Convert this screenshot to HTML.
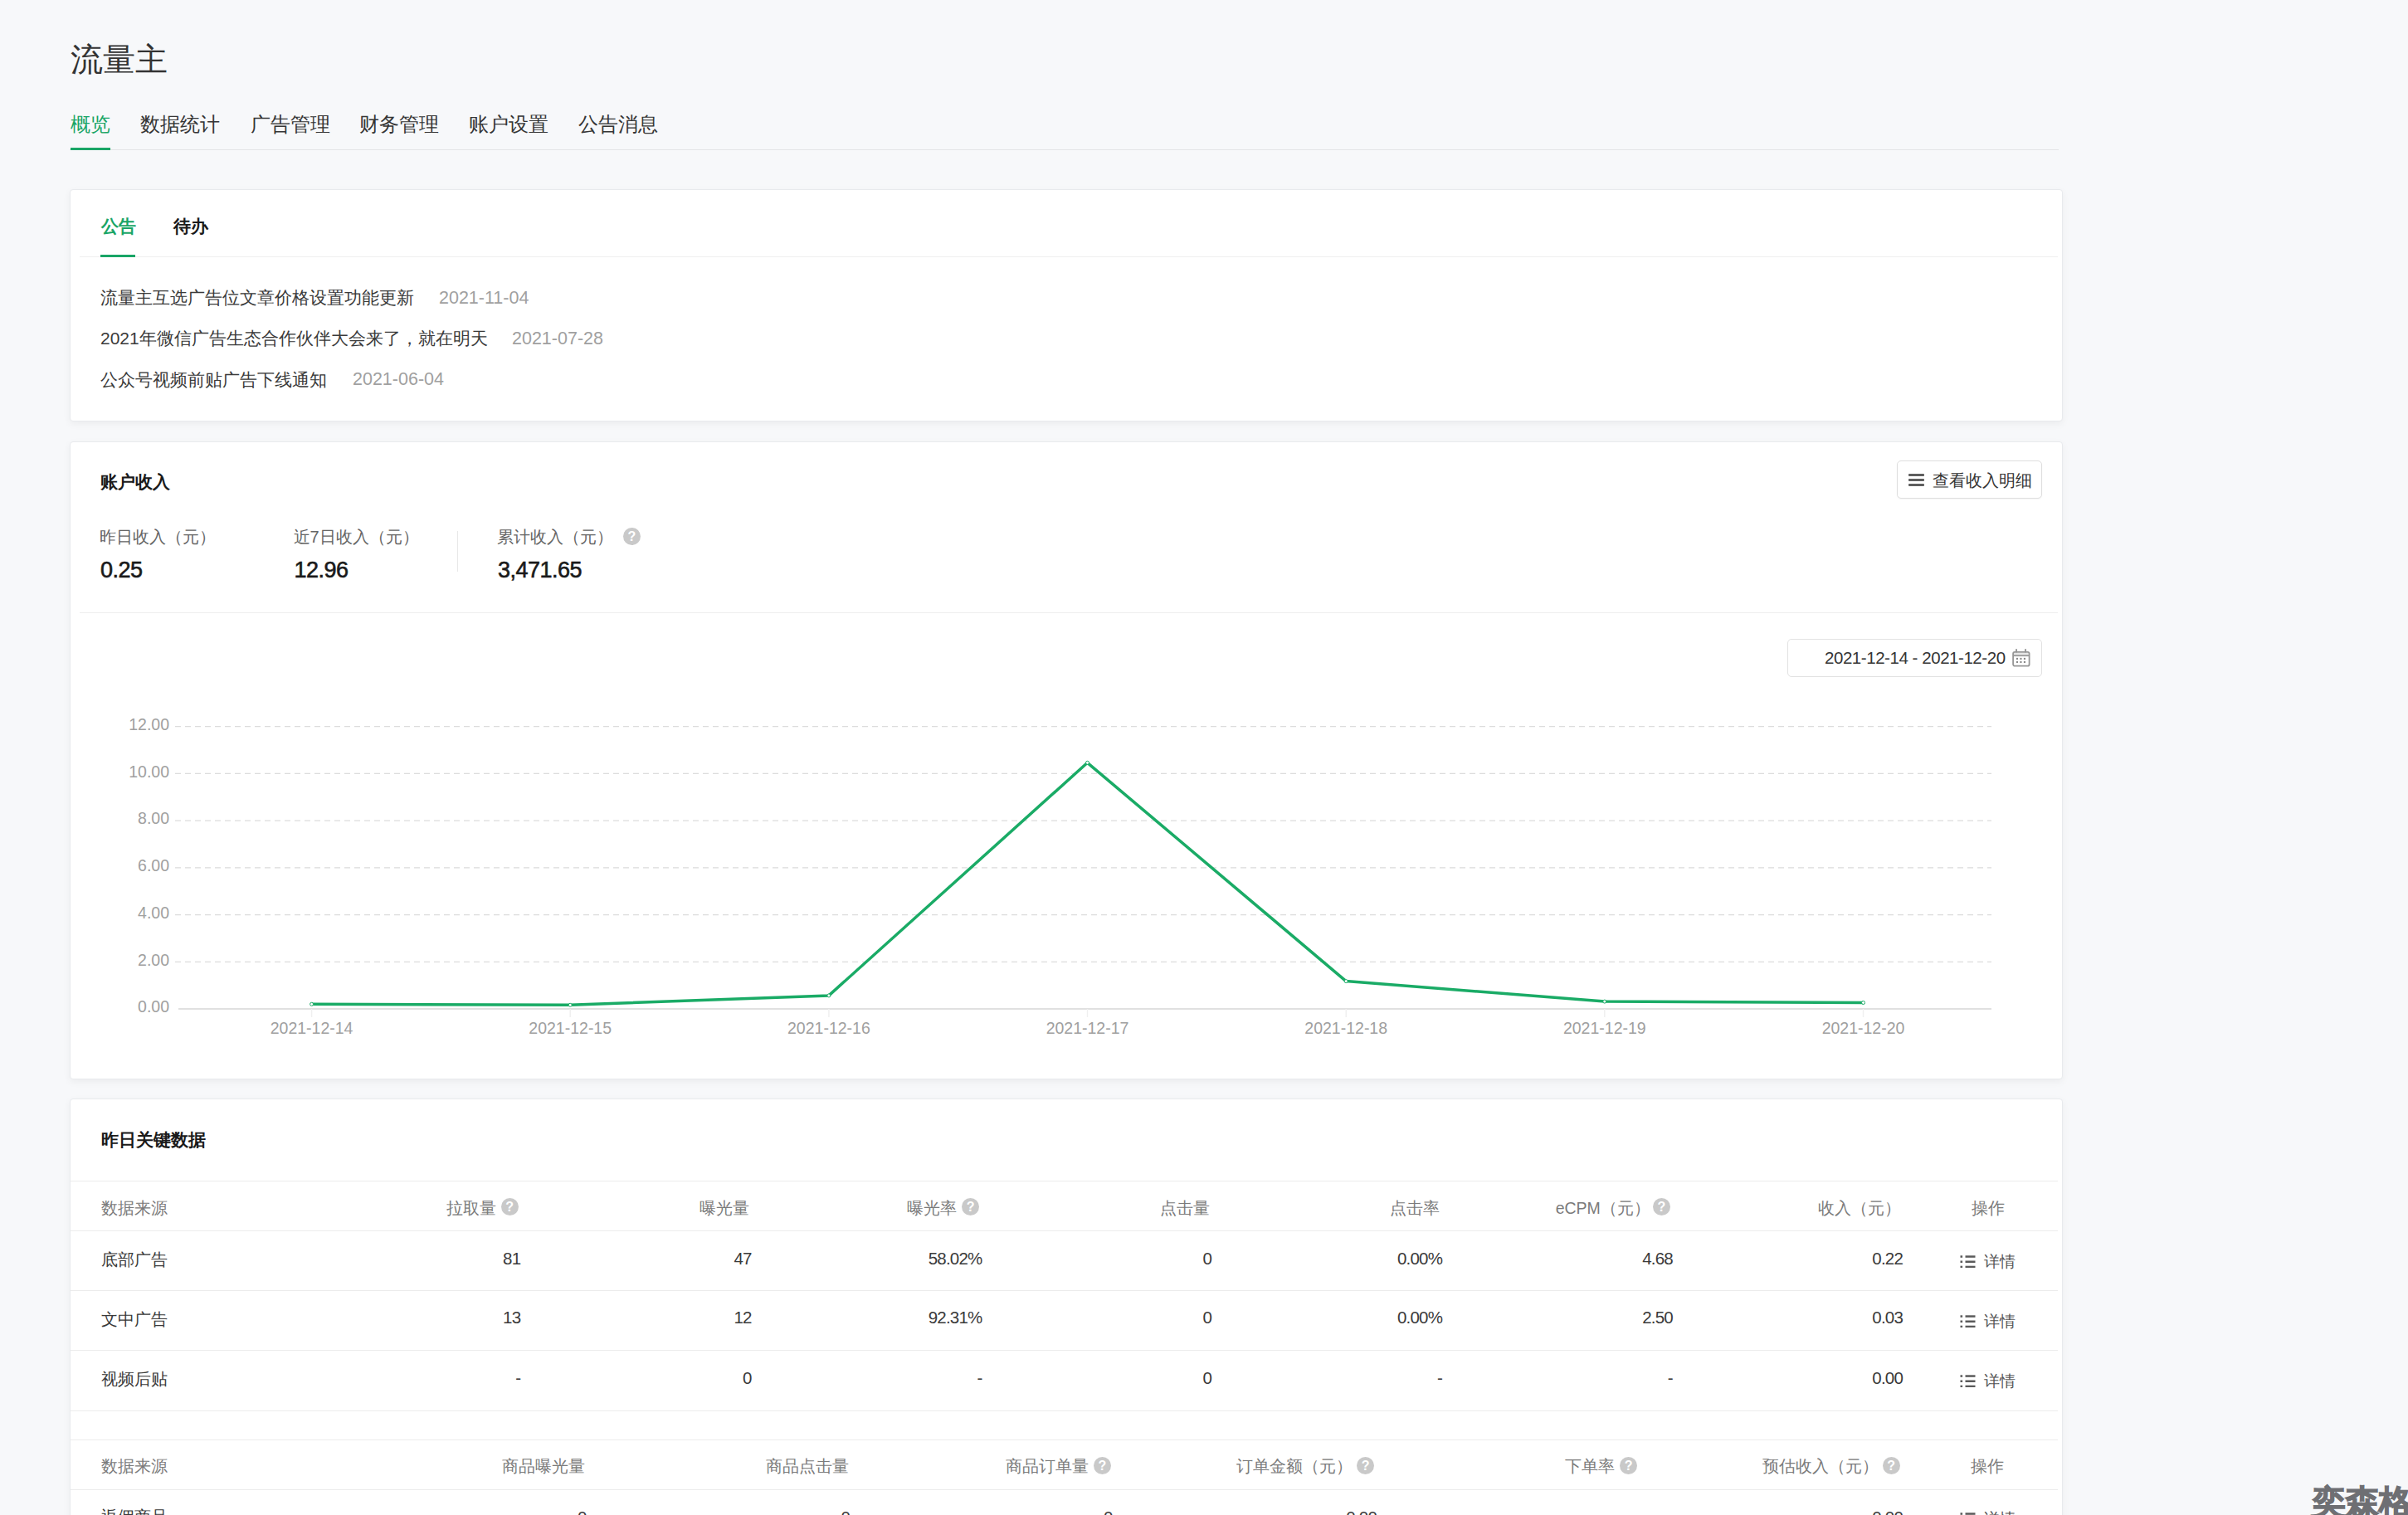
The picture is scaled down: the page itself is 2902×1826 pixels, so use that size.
<!DOCTYPE html>
<html>
<head>
<meta charset="utf-8">
<style>
*{box-sizing:border-box;margin:0;padding:0}
html,body{width:2902px;height:1826px;overflow:hidden;background:#f7f8fa;font-family:"Liberation Sans",sans-serif;color:#353535}
.a{position:absolute;white-space:nowrap;line-height:1}
.card{position:absolute;left:84px;width:2402px;background:#fff;border-radius:4px;box-shadow:0 3px 10px rgba(0,0,0,0.05);border:1px solid #e8eaed}
.hl{position:absolute;height:1px;background:#ececec}
.g{color:#a0a0a0}
.help{position:absolute;width:21px;height:21px;border-radius:50%;background:#c9c9c9}
.help:after{content:"?";position:absolute;left:0;top:0;width:21px;height:21px;line-height:22px;text-align:center;color:#fff;font-size:16px;font-weight:bold}
.r{text-align:right}
.th{font-size:19.5px;color:#7b7b7b}
.td{font-size:19.5px;color:#3a3a3a}
.tn{font-size:20.5px;color:#3a3a3a;letter-spacing:-0.8px}
.ico{position:absolute}
</style>
</head>
<body>

<div class="a" style="left:85px;top:51.5px;font-size:39px;color:#333">流量主</div>
<div class="a" style="left:85.0px;top:138px;font-size:24px;color:#19a566">概览</div>
<div class="a" style="left:169.0px;top:138px;font-size:24px;color:#353535">数据统计</div>
<div class="a" style="left:301.8px;top:138px;font-size:24px;color:#353535">广告管理</div>
<div class="a" style="left:432.6px;top:138px;font-size:24px;color:#353535">财务管理</div>
<div class="a" style="left:565.1px;top:138px;font-size:24px;color:#353535">账户设置</div>
<div class="a" style="left:697.2px;top:138px;font-size:24px;color:#353535">公告消息</div>
<div class="hl" style="left:84px;top:180px;width:2397px;background:#e3e4e6"></div>
<div style="position:absolute;left:85px;top:178px;width:48px;height:3px;background:#19a566"></div>
<div class="card" style="top:228px;height:280px"></div>
<div class="a" style="left:122px;top:262px;font-size:21px;font-weight:bold;color:#19a566">公告</div>
<div class="a" style="left:209px;top:262px;font-size:21px;font-weight:bold;color:#1a1a1a">待办</div>
<div class="hl" style="left:96px;top:309px;width:2384px;background:#efefef"></div>
<div style="position:absolute;left:121px;top:307px;width:42px;height:3px;background:#19a566"></div>
<div class="a" style="left:121px;top:348.0px;font-size:21px;color:#3a3a3a">流量主互选广告位文章价格设置功能更新</div>
<div class="a g" style="left:529px;top:348.5px;font-size:21.5px">2021-11-04</div>
<div class="a" style="left:121px;top:397.3px;font-size:21px;color:#3a3a3a">2021年微信广告生态合作伙伴大会来了，就在明天</div>
<div class="a g" style="left:617px;top:397.8px;font-size:21.5px">2021-07-28</div>
<div class="a" style="left:121px;top:446.5px;font-size:21px;color:#3a3a3a">公众号视频前贴广告下线通知</div>
<div class="a g" style="left:425px;top:447.0px;font-size:21.5px">2021-06-04</div>
<div class="card" style="top:532px;height:769px"></div>
<div class="a" style="left:121px;top:570px;font-size:21px;font-weight:bold;color:#1a1a1a">账户收入</div>
<div style="position:absolute;left:2286px;top:555px;width:175px;height:46px;border:1px solid #dedede;border-radius:5px;background:#fff;box-shadow:0 1px 2px rgba(0,0,0,0.04)"></div>
<div style="position:absolute;left:2300px;top:571px;width:18.5px;height:2.8px;background:#5e5e5e;border-radius:1px"></div>
<div style="position:absolute;left:2300px;top:577px;width:18.5px;height:2.8px;background:#5e5e5e;border-radius:1px"></div>
<div style="position:absolute;left:2300px;top:583px;width:18.5px;height:2.8px;background:#5e5e5e;border-radius:1px"></div>
<div class="a" style="left:2329px;top:569px;font-size:20px;color:#353535">查看收入明细</div>
<div class="a" style="left:120px;top:636.5px;font-size:20px;color:#666">昨日收入（元）</div>
<div class="a" style="left:121px;top:674px;font-size:27px;color:#1a1a1a;-webkit-text-stroke:0.6px #1a1a1a;letter-spacing:-0.5px">0.25</div>
<div class="a" style="left:353.5px;top:636.5px;font-size:20px;color:#666">近7日收入（元）</div>
<div class="a" style="left:354.5px;top:674px;font-size:27px;color:#1a1a1a;-webkit-text-stroke:0.6px #1a1a1a;letter-spacing:-0.5px">12.96</div>
<div class="a" style="left:599px;top:636.5px;font-size:20px;color:#666">累计收入（元）</div>
<div class="a" style="left:600px;top:674px;font-size:27px;color:#1a1a1a;-webkit-text-stroke:0.6px #1a1a1a;letter-spacing:-0.5px">3,471.65</div>
<div style="position:absolute;left:551px;top:640px;width:1px;height:49px;background:#e8e8e8"></div>
<div class="help" style="left:751px;top:636px"></div>
<div class="hl" style="left:96px;top:738px;width:2384px;background:#efefef"></div>
<div style="position:absolute;left:2154px;top:770px;width:307px;height:46px;border:1px solid #e2e2e2;border-radius:5px;background:#fff"></div>
<div class="a" style="left:2199px;top:783px;font-size:20.5px;color:#353535;letter-spacing:-0.45px">2021-12-14 - 2021-12-20</div>
<svg class="ico" style="left:2425px;top:782px" width="22" height="22" viewBox="0 0 22 22">
<rect x="2" y="4.7" width="17.7" height="2.6" fill="#e6e6e6"/>
<rect x="1.1" y="3.8" width="19.5" height="16.9" rx="2" fill="none" stroke="#979797" stroke-width="1.8"/>
<rect x="1" y="7.3" width="19.7" height="1.8" fill="#979797"/>
<rect x="4.1" y="0.2" width="1.9" height="4.2" fill="#979797"/><rect x="15.1" y="0.2" width="1.9" height="4.2" fill="#979797"/>
<g fill="#8a8a8a"><rect x="4.9" y="10.9" width="2.1" height="2.1"/><rect x="9.4" y="10.9" width="2.1" height="2.1"/><rect x="13.9" y="10.9" width="2.1" height="2.1"/>
<rect x="4.9" y="14.9" width="2.1" height="2.1"/><rect x="9.4" y="14.9" width="2.1" height="2.1"/><rect x="13.9" y="14.9" width="2.1" height="2.1"/></g>
</svg>
<svg class="ico" style="left:0;top:0" width="2902" height="1826" viewBox="0 0 2902 1826">
<line x1="211" y1="875.7" x2="2400" y2="875.7" stroke="#dcdcdc" stroke-width="1.2" stroke-dasharray="7 5"/>
<text x="204" y="880.0" text-anchor="end" font-family="Liberation Sans" font-size="19.5" fill="#a0a0a0">12.00</text>
<line x1="211" y1="932.4" x2="2400" y2="932.4" stroke="#dcdcdc" stroke-width="1.2" stroke-dasharray="7 5"/>
<text x="204" y="936.7" text-anchor="end" font-family="Liberation Sans" font-size="19.5" fill="#a0a0a0">10.00</text>
<line x1="211" y1="989.1" x2="2400" y2="989.1" stroke="#dcdcdc" stroke-width="1.2" stroke-dasharray="7 5"/>
<text x="204" y="993.4" text-anchor="end" font-family="Liberation Sans" font-size="19.5" fill="#a0a0a0">8.00</text>
<line x1="211" y1="1045.9" x2="2400" y2="1045.9" stroke="#dcdcdc" stroke-width="1.2" stroke-dasharray="7 5"/>
<text x="204" y="1050.2" text-anchor="end" font-family="Liberation Sans" font-size="19.5" fill="#a0a0a0">6.00</text>
<line x1="211" y1="1102.6" x2="2400" y2="1102.6" stroke="#dcdcdc" stroke-width="1.2" stroke-dasharray="7 5"/>
<text x="204" y="1106.9" text-anchor="end" font-family="Liberation Sans" font-size="19.5" fill="#a0a0a0">4.00</text>
<line x1="211" y1="1159.3" x2="2400" y2="1159.3" stroke="#dcdcdc" stroke-width="1.2" stroke-dasharray="7 5"/>
<text x="204" y="1163.6" text-anchor="end" font-family="Liberation Sans" font-size="19.5" fill="#a0a0a0">2.00</text>
<text x="204" y="1220.3" text-anchor="end" font-family="Liberation Sans" font-size="19.5" fill="#a0a0a0">0.00</text>
<line x1="215" y1="1216" x2="2400" y2="1216" stroke="#e0e0e0" stroke-width="2"/>
<line x1="375.6" y1="1216" x2="375.6" y2="1226" stroke="#f0f0f0" stroke-width="1.5"/>
<text x="375.6" y="1246" text-anchor="middle" font-family="Liberation Sans" font-size="19.5" fill="#a0a0a0">2021-12-14</text>
<line x1="687.2" y1="1216" x2="687.2" y2="1226" stroke="#f0f0f0" stroke-width="1.5"/>
<text x="687.2" y="1246" text-anchor="middle" font-family="Liberation Sans" font-size="19.5" fill="#a0a0a0">2021-12-15</text>
<line x1="998.9" y1="1216" x2="998.9" y2="1226" stroke="#f0f0f0" stroke-width="1.5"/>
<text x="998.9" y="1246" text-anchor="middle" font-family="Liberation Sans" font-size="19.5" fill="#a0a0a0">2021-12-16</text>
<line x1="1310.5" y1="1216" x2="1310.5" y2="1226" stroke="#f0f0f0" stroke-width="1.5"/>
<text x="1310.5" y="1246" text-anchor="middle" font-family="Liberation Sans" font-size="19.5" fill="#a0a0a0">2021-12-17</text>
<line x1="1622.2" y1="1216" x2="1622.2" y2="1226" stroke="#f0f0f0" stroke-width="1.5"/>
<text x="1622.2" y="1246" text-anchor="middle" font-family="Liberation Sans" font-size="19.5" fill="#a0a0a0">2021-12-18</text>
<line x1="1933.8" y1="1216" x2="1933.8" y2="1226" stroke="#f0f0f0" stroke-width="1.5"/>
<text x="1933.8" y="1246" text-anchor="middle" font-family="Liberation Sans" font-size="19.5" fill="#a0a0a0">2021-12-19</text>
<line x1="2245.5" y1="1216" x2="2245.5" y2="1226" stroke="#f0f0f0" stroke-width="1.5"/>
<text x="2245.5" y="1246" text-anchor="middle" font-family="Liberation Sans" font-size="19.5" fill="#a0a0a0">2021-12-20</text>
<polyline points="375.6,1210.3 687.2,1211.3 998.9,1199.9 1310.5,919.3 1622.2,1182.6 1933.8,1207.1 2245.5,1208.5" fill="none" stroke="#1aab66" stroke-width="3.5" stroke-linejoin="round"/>
<circle cx="375.6" cy="1210.3" r="2" fill="#fff" stroke="#1aab66" stroke-width="1"/>
<circle cx="687.2" cy="1211.3" r="2" fill="#fff" stroke="#1aab66" stroke-width="1"/>
<circle cx="998.9" cy="1199.9" r="2" fill="#fff" stroke="#1aab66" stroke-width="1"/>
<circle cx="1310.5" cy="919.3" r="2" fill="#fff" stroke="#1aab66" stroke-width="1"/>
<circle cx="1622.2" cy="1182.6" r="2" fill="#fff" stroke="#1aab66" stroke-width="1"/>
<circle cx="1933.8" cy="1207.1" r="2" fill="#fff" stroke="#1aab66" stroke-width="1"/>
<circle cx="2245.5" cy="1208.5" r="2" fill="#fff" stroke="#1aab66" stroke-width="1"/>
</svg>
<div class="card" style="top:1324px;height:560px"></div>
<div class="a" style="left:122px;top:1363px;font-size:21px;font-weight:bold;color:#1a1a1a">昨日关键数据</div>
<div class="hl" style="left:85px;top:1423px;width:2395px;background:#ececec"></div>
<div class="hl" style="left:85px;top:1483px;width:2395px;background:#ececec"></div>
<div class="hl" style="left:85px;top:1555px;width:2395px;background:#ececec"></div>
<div class="hl" style="left:85px;top:1627px;width:2395px;background:#ececec"></div>
<div class="hl" style="left:85px;top:1700px;width:2395px;background:#ececec"></div>
<div class="hl" style="left:85px;top:1735px;width:2395px;background:#ececec"></div>
<div class="hl" style="left:85px;top:1795px;width:2395px;background:#ececec"></div>
<div class="a th" style="left:121.5px;top:1446.5px">数据来源</div>
<div class="a th" style="left:538.3px;top:1446.5px">拉取量</div>
<div class="help" style="left:603.7px;top:1443.8px"></div>
<div class="a th" style="left:842.5px;top:1446.5px">曝光量</div>
<div class="a th" style="left:1092.5px;top:1446.5px">曝光率</div>
<div class="help" style="left:1159.1px;top:1443.8px"></div>
<div class="a th" style="left:1397.7px;top:1446.5px">点击量</div>
<div class="a th" style="left:1674.6px;top:1446.5px">点击率</div>
<div class="a th" style="left:1874.7px;top:1446.5px">eCPM（元）</div>
<div class="help" style="left:1991.8px;top:1443.8px"></div>
<div class="a th" style="left:2191.4px;top:1446.5px">收入（元）</div>
<div class="a th" style="left:2376px;top:1446.5px">操作</div>
<div class="a td" style="left:121.5px;top:1509px">底部广告</div>
<div class="a tn r" style="left:327.29999999999995px;width:300px;top:1506.5px">81</div>
<div class="a tn r" style="left:605.6px;width:300px;top:1506.5px">47</div>
<div class="a tn r" style="left:883.5px;width:300px;top:1506.5px">58.02%</div>
<div class="a tn r" style="left:1160.2px;width:300px;top:1506.5px">0</div>
<div class="a tn r" style="left:1438.1px;width:300px;top:1506.5px">0.00%</div>
<div class="a tn r" style="left:1715.9px;width:300px;top:1506.5px">4.68</div>
<div class="a tn r" style="left:1993px;width:300px;top:1506.5px">0.22</div>
<svg class="ico" style="left:2362px;top:1513px" width="19" height="15" viewBox="0 0 19 15">
<g fill="#5a5a5a"><rect x="0.5" y="0.3" width="2.6" height="2.5"/><rect x="0.5" y="6.5" width="2.6" height="2.5"/><rect x="0.5" y="12.7" width="2.6" height="2.5"/>
<rect x="6.5" y="0.3" width="12" height="2.5"/><rect x="6.5" y="6.5" width="12" height="2.5"/><rect x="6.5" y="12.7" width="12" height="2.5"/></g></svg>
<div class="a td" style="left:2390.5px;top:1512px;font-size:18.5px;color:#555">详情</div>
<div class="a td" style="left:121.5px;top:1580.5px">文中广告</div>
<div class="a tn r" style="left:327.29999999999995px;width:300px;top:1578.0px">13</div>
<div class="a tn r" style="left:605.6px;width:300px;top:1578.0px">12</div>
<div class="a tn r" style="left:883.5px;width:300px;top:1578.0px">92.31%</div>
<div class="a tn r" style="left:1160.2px;width:300px;top:1578.0px">0</div>
<div class="a tn r" style="left:1438.1px;width:300px;top:1578.0px">0.00%</div>
<div class="a tn r" style="left:1715.9px;width:300px;top:1578.0px">2.50</div>
<div class="a tn r" style="left:1993px;width:300px;top:1578.0px">0.03</div>
<svg class="ico" style="left:2362px;top:1584.5px" width="19" height="15" viewBox="0 0 19 15">
<g fill="#5a5a5a"><rect x="0.5" y="0.3" width="2.6" height="2.5"/><rect x="0.5" y="6.5" width="2.6" height="2.5"/><rect x="0.5" y="12.7" width="2.6" height="2.5"/>
<rect x="6.5" y="0.3" width="12" height="2.5"/><rect x="6.5" y="6.5" width="12" height="2.5"/><rect x="6.5" y="12.7" width="12" height="2.5"/></g></svg>
<div class="a td" style="left:2390.5px;top:1583.5px;font-size:18.5px;color:#555">详情</div>
<div class="a td" style="left:121.5px;top:1653px">视频后贴</div>
<div class="a tn r" style="left:327.29999999999995px;width:300px;top:1650.5px">-</div>
<div class="a tn r" style="left:605.6px;width:300px;top:1650.5px">0</div>
<div class="a tn r" style="left:883.5px;width:300px;top:1650.5px">-</div>
<div class="a tn r" style="left:1160.2px;width:300px;top:1650.5px">0</div>
<div class="a tn r" style="left:1438.1px;width:300px;top:1650.5px">-</div>
<div class="a tn r" style="left:1715.9px;width:300px;top:1650.5px">-</div>
<div class="a tn r" style="left:1993px;width:300px;top:1650.5px">0.00</div>
<svg class="ico" style="left:2362px;top:1657px" width="19" height="15" viewBox="0 0 19 15">
<g fill="#5a5a5a"><rect x="0.5" y="0.3" width="2.6" height="2.5"/><rect x="0.5" y="6.5" width="2.6" height="2.5"/><rect x="0.5" y="12.7" width="2.6" height="2.5"/>
<rect x="6.5" y="0.3" width="12" height="2.5"/><rect x="6.5" y="6.5" width="12" height="2.5"/><rect x="6.5" y="12.7" width="12" height="2.5"/></g></svg>
<div class="a td" style="left:2390.5px;top:1656px;font-size:18.5px;color:#555">详情</div>
<div class="a th" style="left:121.5px;top:1758.3px">数据来源</div>
<div class="a th" style="left:605.3px;top:1758.3px">商品曝光量</div>
<div class="a th" style="left:922.7px;top:1758.3px">商品点击量</div>
<div class="a th" style="left:1212.3px;top:1758.3px">商品订单量</div>
<div class="help" style="left:1318.0px;top:1755.8px"></div>
<div class="a th" style="left:1490px;top:1758.3px">订单金额（元）</div>
<div class="help" style="left:1635.1px;top:1755.8px"></div>
<div class="a th" style="left:1885.6px;top:1758.3px">下单率</div>
<div class="help" style="left:1952.1px;top:1755.8px"></div>
<div class="a th" style="left:2124.2px;top:1758.3px">预估收入（元）</div>
<div class="help" style="left:2268.6px;top:1755.8px"></div>
<div class="a th" style="left:2375.3px;top:1758.3px">操作</div>
<div class="a td" style="left:121.5px;top:1819px">返佣商品</div>
<div class="a tn r" style="left:406.5px;width:300px;top:1818.5px">0</div>
<div class="a tn r" style="left:724px;width:300px;top:1818.5px">0</div>
<div class="a tn r" style="left:1040.6px;width:300px;top:1818.5px">0</div>
<div class="a tn r" style="left:1359px;width:300px;top:1818.5px">0.00</div>
<div class="a tn r" style="left:1673px;width:300px;top:1818.5px">-</div>
<div class="a tn r" style="left:1993px;width:300px;top:1818.5px">0.00</div>
<svg class="ico" style="left:2362px;top:1823px" width="19" height="15" viewBox="0 0 19 15">
<g fill="#5a5a5a"><rect x="0.5" y="0.3" width="2.6" height="2.5"/><rect x="0.5" y="6.5" width="2.6" height="2.5"/><rect x="0.5" y="12.7" width="2.6" height="2.5"/>
<rect x="6.5" y="0.3" width="12" height="2.5"/><rect x="6.5" y="6.5" width="12" height="2.5"/><rect x="6.5" y="12.7" width="12" height="2.5"/></g></svg>
<div class="a td" style="left:2390.5px;top:1822px;font-size:18.5px;color:#555">详情</div>
<div class="a" style="left:2786.5px;top:1789.5px;font-size:40px;font-weight:900;color:#6e6f73;-webkit-text-stroke:1.3px #6e6f73">奕森格</div>
</body>
</html>
